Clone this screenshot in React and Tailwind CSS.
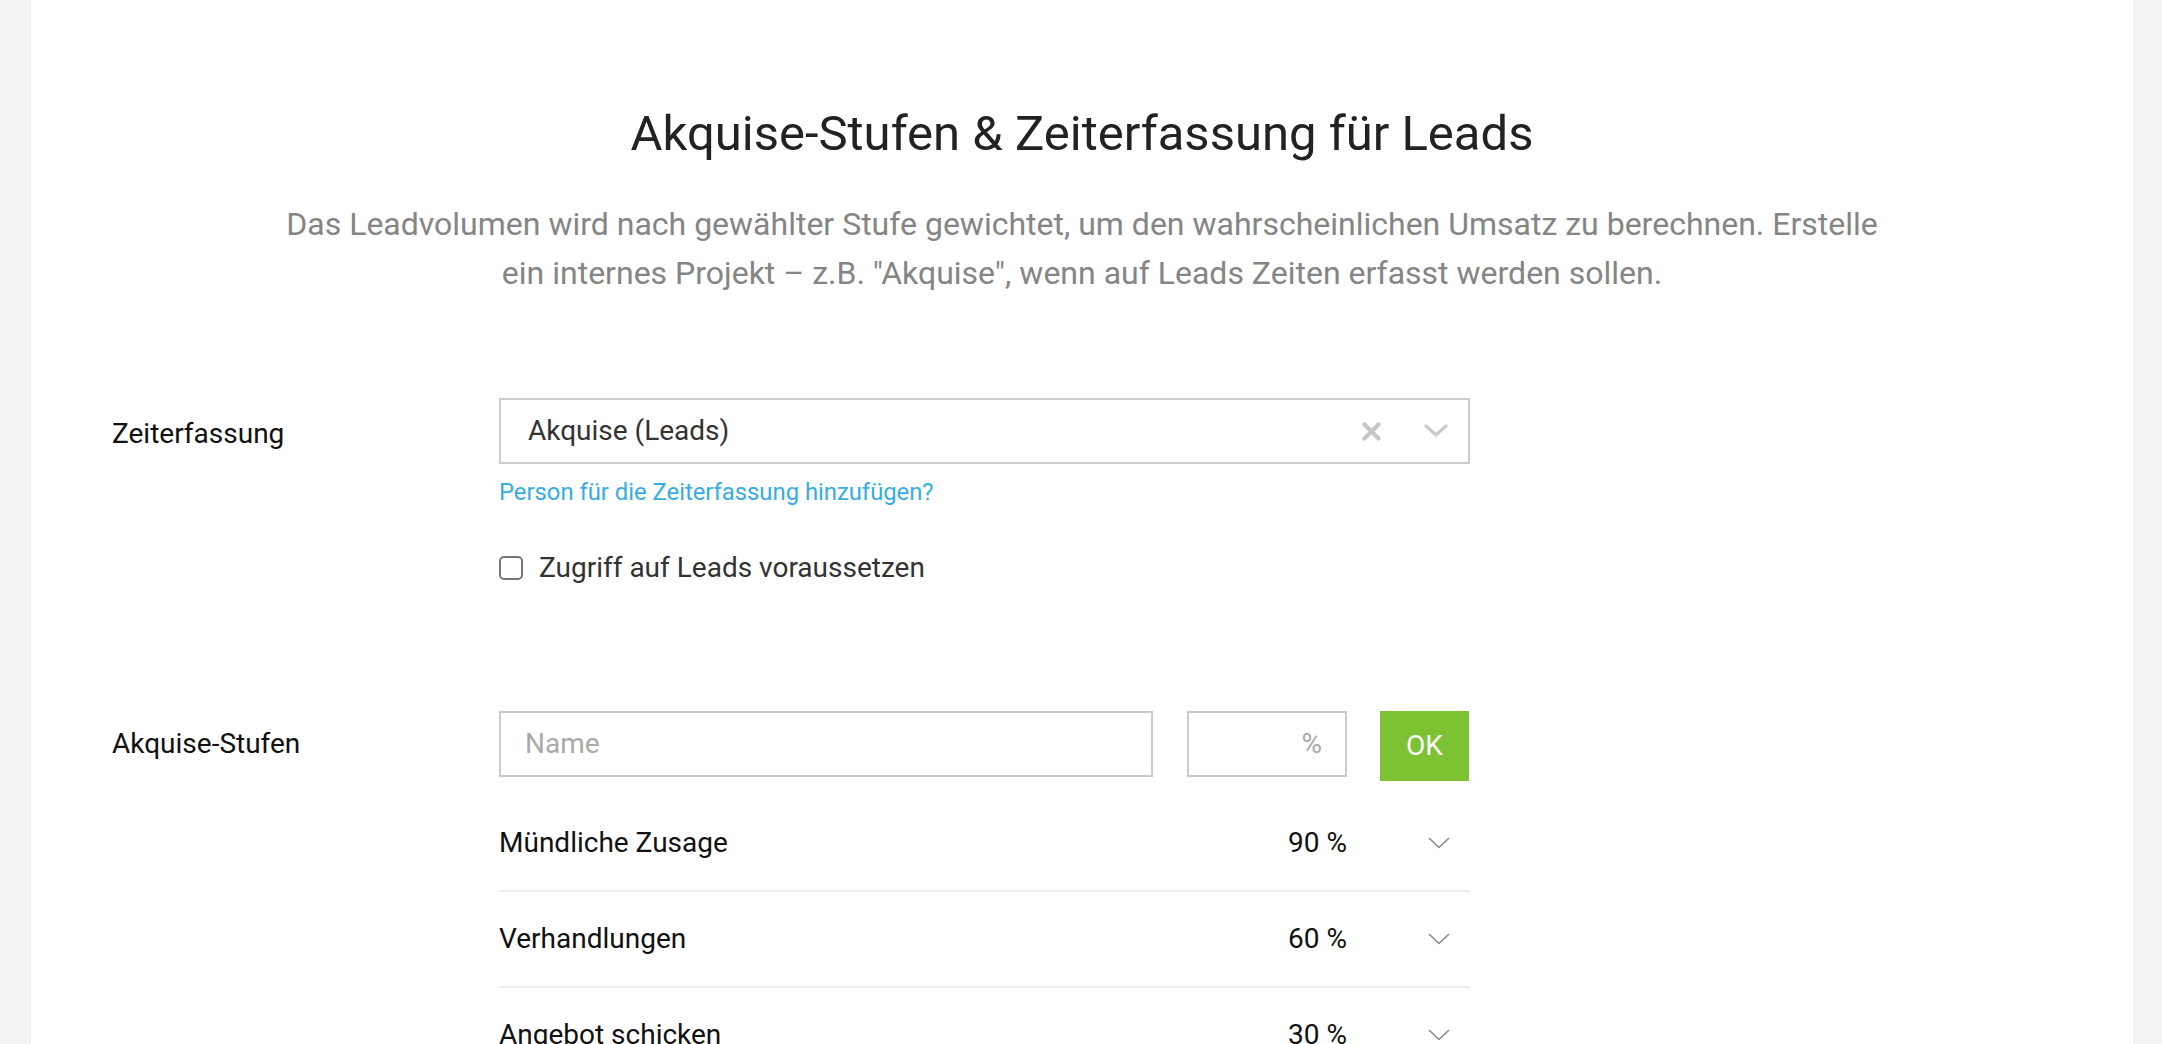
import React from "react";

const stages = [
  { name: "Mündliche Zusage", pct: 90 },
  { name: "Verhandlungen", pct: 60 },
  { name: "Angebot schicken", pct: 30 },
  { name: "Erstkontakt", pct: 10 },
];

function ThinChevron() {
  return (
    <svg width="22" height="12" viewBox="0 0 22 12" fill="none">
      <path d="M1.5 1.5 L11 10.5 L20.5 1.5" stroke="#8a8a8a" strokeWidth="1.6" strokeLinecap="round" strokeLinejoin="round" />
    </svg>
  );
}

export default function App() {
  return (
    <div className="min-h-screen bg-[#f3f3f3] flex font-['Roboto',sans-serif]">
      <div className="flex-1 ml-[31px] mr-[29px] bg-white min-h-screen pb-[80px]">
        <div className="pt-[104px] flex flex-col items-center">
          <h1 className="text-[49px] leading-[60px] font-normal text-[#222222]">
            Akquise-Stufen &amp; Zeiterfassung für Leads
          </h1>
          <p className="mt-[36px] text-[32px] leading-[49px] text-[#858585] text-center">
            Das Leadvolumen wird nach gewählter Stufe gewichtet, um den wahrscheinlichen Umsatz zu berechnen. Erstelle
            <br />
            ein internes Projekt – z.B. "Akquise", wenn auf Leads Zeiten erfasst werden sollen.
          </p>
        </div>

        <div className="mt-[100px] pl-[81px]">
          {/* Zeiterfassung */}
          <div className="flex items-start">
            <div className="w-[387px] text-[28px] leading-[66px] pt-[3px] text-[#111111]">Zeiterfassung</div>
            <div className="w-[971px]">
              <div className="h-[66px] border-2 border-[#cccccc] flex items-center pl-[27px] pr-[18px]">
                <span className="flex-1 text-[28px] text-[#333333]">Akquise (Leads)</span>
                <svg width="21" height="21" viewBox="0 0 21 21" fill="none" className="mr-[42px]">
                  <path d="M3.5 3.5 L17.5 17.5 M17.5 3.5 L3.5 17.5" stroke="#c6c6c6" strokeWidth="4.2" strokeLinecap="round" />
                </svg>
                <svg width="24" height="14" viewBox="0 0 24 14" fill="none" className="mr-[2px]">
                  <path d="M2 2 L12 11 L22 2" stroke="#cccccc" strokeWidth="3.4" strokeLinecap="round" strokeLinejoin="round" />
                </svg>
              </div>
              <div className="mt-[13px] text-[23.8px] leading-[30px] text-[#34ade4]">
                Person für die Zeiterfassung hinzufügen?
              </div>
              <label className="mt-[44px] flex items-center h-[34px]">
                <span className="w-[24px] h-[24px] border-2 border-[#777777] rounded-[5px]" />
                <span className="ml-[16px] text-[28px] text-[#333333]">Zugriff auf Leads voraussetzen</span>
              </label>
            </div>
          </div>

          {/* Akquise-Stufen */}
          <div className="mt-[126px] flex items-start">
            <div className="w-[387px] text-[28px] leading-[66px] text-[#111111]">Akquise-Stufen</div>
            <div className="w-[971px]">
              <div className="flex items-start">
                <div className="w-[654px] h-[66px] border-2 border-[#cccccc] flex items-center pl-[24px] text-[28px] text-[#aaaaaa]">
                  Name
                </div>
                <div className="ml-[34px] w-[160px] h-[66px] border-2 border-[#cccccc] flex items-center justify-end pr-[23px] text-[28px] text-[#aaaaaa]">
                  %
                </div>
                <div className="ml-[33px] w-[89px] h-[70px] bg-[#7dc233] flex items-center justify-center text-[28px] text-white">
                  OK
                </div>
              </div>
              <div className="mt-[15px]">
                {stages.map((s) => (
                  <div key={s.name} className="h-[96px] border-b-2 border-[#ececec] flex items-center text-[28px] text-[#111111]">
                    <span className="flex-1">{s.name}</span>
                    <span>{s.pct} %</span>
                    <div className="w-[123px] flex justify-end pr-[20px]">
                      <ThinChevron />
                    </div>
                  </div>
                ))}
              </div>
            </div>
          </div>
        </div>
      </div>
    </div>
  );
}
